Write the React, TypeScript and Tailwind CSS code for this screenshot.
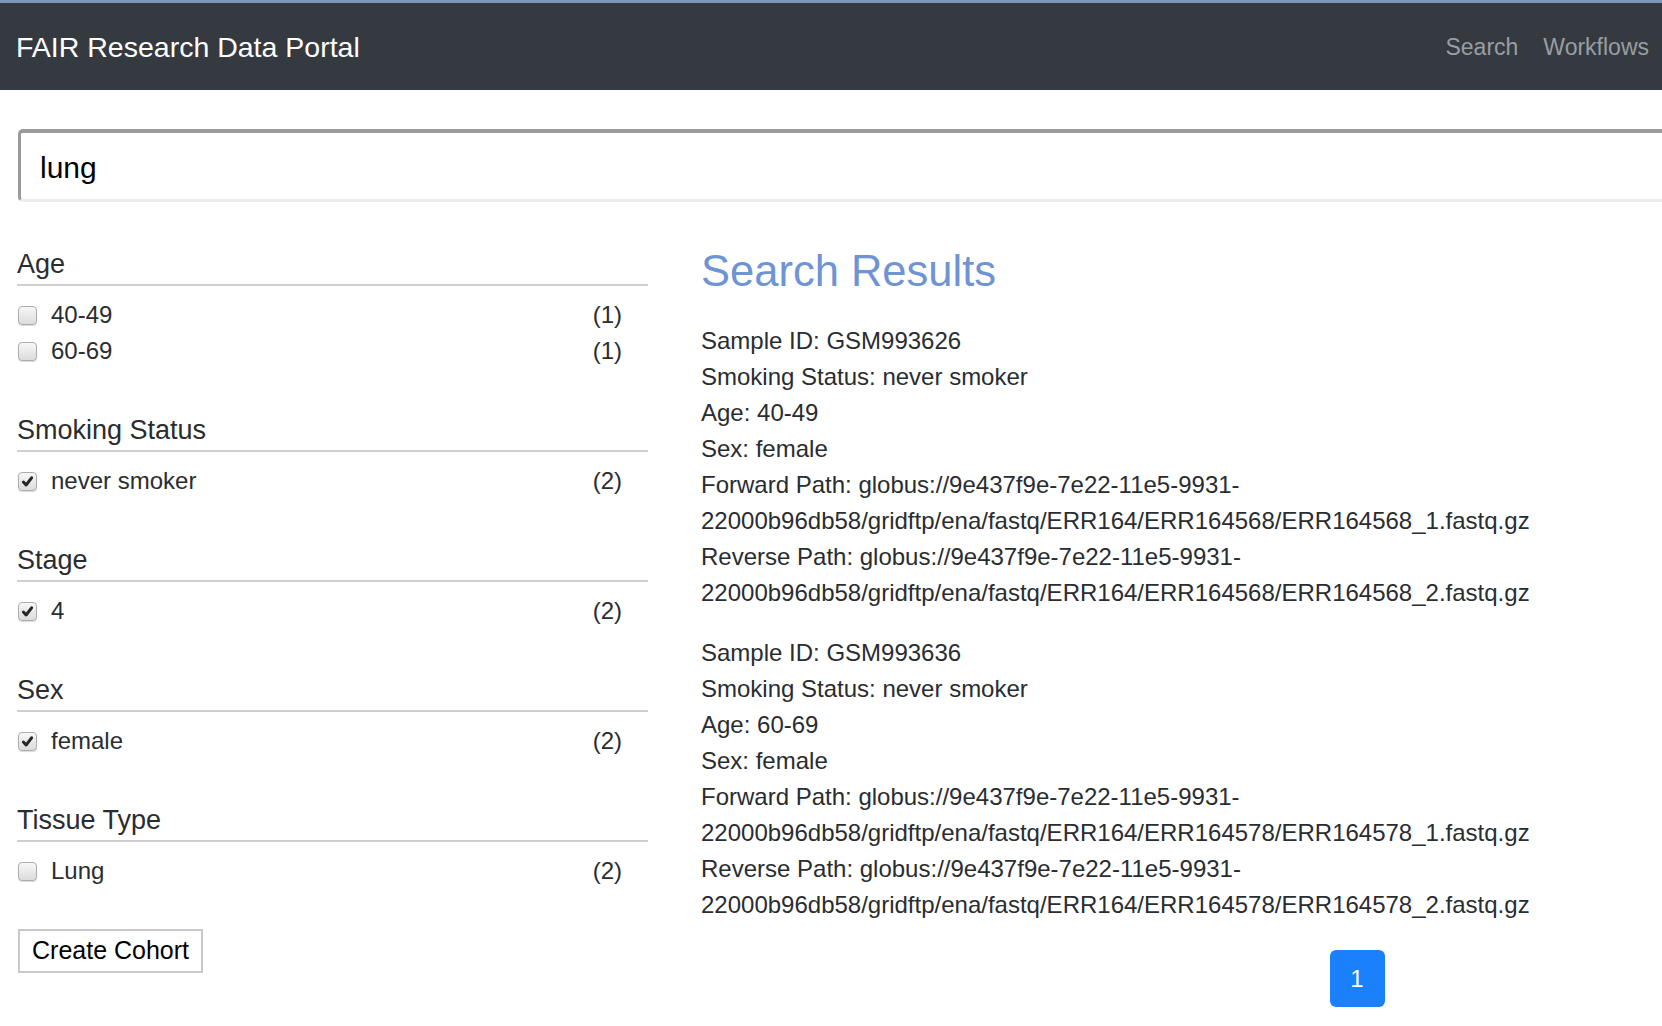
import React from "react";

type Facet = { label: string; checked: boolean; count: number };
type Section = { title: string; items: Facet[] };

const sections: Section[] = [
  { title: "Age", items: [ { label: "40-49", checked: false, count: 1 }, { label: "60-69", checked: false, count: 1 } ] },
  { title: "Smoking Status", items: [ { label: "never smoker", checked: true, count: 2 } ] },
  { title: "Stage", items: [ { label: "4", checked: true, count: 2 } ] },
  { title: "Sex", items: [ { label: "female", checked: true, count: 2 } ] },
  { title: "Tissue Type", items: [ { label: "Lung", checked: false, count: 2 } ] },
];

const results = [
  { id: "GSM993626", smoking: "never smoker", age: "40-49", sex: "female", run: "ERR164568" },
  { id: "GSM993636", smoking: "never smoker", age: "60-69", sex: "female", run: "ERR164578" },
];

function Checkbox({ checked }: { checked: boolean }) {
  return (
    <div className="ml-[1px] mr-[14px] flex h-[19px] w-[19px] shrink-0 items-center justify-center rounded-[4px] border border-[#adadad] bg-gradient-to-b from-[#f7f7f7] to-[#dcdcdc] shadow-[0_1px_1px_rgba(0,0,0,0.15)]">
      {checked && (
        <svg width="13" height="13" viewBox="0 0 13 13">
          <path d="M2.4 7 L5.1 10 L10.6 2.8" fill="none" stroke="#262626" strokeWidth="3" strokeLinecap="round" strokeLinejoin="round" />
        </svg>
      )}
    </div>
  );
}

export default function App() {
  const font = { fontFamily: '"Liberation Sans", Arial, Helvetica, sans-serif' };
  return (
    <div className="min-h-[1026px] w-full overflow-hidden bg-white text-[#2a2d30]" style={font}>
      <nav className="flex h-[90px] items-center justify-between border-t-[3px] border-[#7b96b8] bg-[#353a41] pl-[16px] pr-[13px]">
        <div className="pt-[2px] text-[28.5px] leading-none text-white">FAIR Research Data Portal</div>
        <div className="flex items-center gap-[25px] pt-[2px] text-[23px] leading-none text-[#9a9da1]">
          <span>Search</span>
          <span>Workflows</span>
        </div>
      </nav>

      <div className="w-[2040px]">
        <div className="ml-[18px] mt-[39px] flex h-[73px] items-center rounded-l-[5px] border-l-[3px] border-t-[4px] border-b-[3px] border-l-[#9a9a9a] border-t-[#9a9a9a] border-b-[#ececec] pl-[19px] pt-[3px]">
          <span className="text-[30px] leading-none text-black">lung</span>
        </div>

        <div className="mt-[46px] flex">
          <div className="ml-[17px] w-[631px] shrink-0">
            {sections.map((s, i) => (
              <div key={s.title} className={i === 0 ? "" : "mt-[45px]"}>
                <div className="border-b-2 border-[#cfcfcf] pb-[4px] text-[27px] leading-[32px]">{s.title}</div>
                <div className="mt-[11px]">
                  {s.items.map((it) => (
                    <div key={it.label} className="flex h-[36px] items-center justify-between pr-[26px] text-[24px]">
                      <div className="flex items-center">
                        <Checkbox checked={it.checked} />
                        <span>{it.label}</span>
                      </div>
                      <span>({it.count})</span>
                    </div>
                  ))}
                </div>
              </div>
            ))}
            <button className="ml-[1px] mt-[40px] flex h-[44px] items-center border-2 border-[#c9c9c9] bg-white px-[12px] pb-[2px] text-[25px] leading-none text-black">
              Create Cohort
            </button>
          </div>

          <div className="ml-[53px] w-[1312px] shrink-0">
            <h1 className="text-[43.5px] leading-[46px] text-[#6f94d4]">Search Results</h1>
            <div className="mt-[29px] flex flex-col gap-[24px]">
              {results.map((r) => (
                <div key={r.id} className="text-[24px] leading-[36px]">
                  <p>Sample ID: {r.id}</p>
                  <p>Smoking Status: {r.smoking}</p>
                  <p>Age: {r.age}</p>
                  <p>Sex: {r.sex}</p>
                  <p>Forward Path: globus://9e437f9e-7e22-11e5-9931-22000b96db58/gridftp/ena/fastq/ERR164/{r.run}/{r.run}_1.fastq.gz</p>
                  <p>Reverse Path: globus://9e437f9e-7e22-11e5-9931-22000b96db58/gridftp/ena/fastq/ERR164/{r.run}/{r.run}_2.fastq.gz</p>
                </div>
              ))}
            </div>
            <div className="mt-[27px] flex justify-center">
              <div className="flex h-[57px] w-[55px] items-center justify-center rounded-[6px] bg-[#1a80fb] text-[24px] text-white">1</div>
            </div>
          </div>
        </div>
      </div>
    </div>
  );
}
